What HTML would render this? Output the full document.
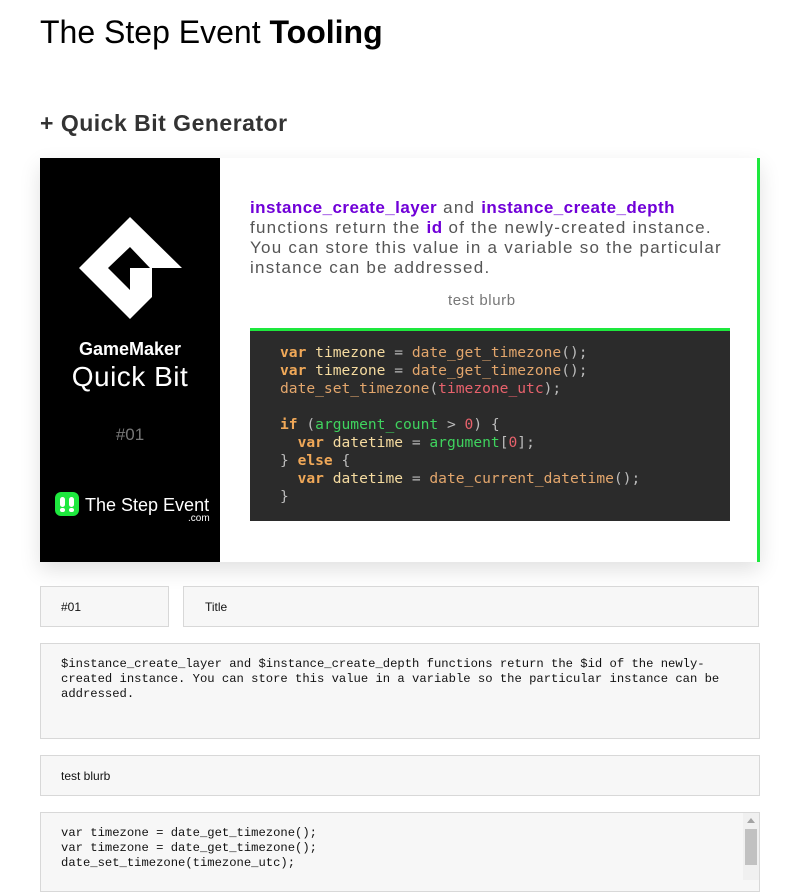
<!DOCTYPE html>
<html><head><meta charset="utf-8"><style>
body{margin:0;background:#fff;width:793px;height:880px;overflow:hidden;font-family:"Liberation Sans",sans-serif;position:relative}
.a{position:absolute;white-space:nowrap}
h1{position:absolute;left:40px;top:14px;margin:0;font-weight:400;font-size:32px;color:#000;letter-spacing:0px}
h2{position:absolute;left:40px;top:110px;margin:0;font-size:23px;color:#333;letter-spacing:0.5px}
.card{position:absolute;left:40px;top:158px;width:720px;height:404px;background:#fff;box-shadow:0 8px 20px rgba(0,0,0,.12)}
.left{position:absolute;left:0;top:0;width:180px;height:404px;background:#000}
.gr{position:absolute;right:0;top:0;width:3px;height:404px;background:#1ee83e}
.txt{position:absolute;left:210px;top:40px;font-size:17px;line-height:20px;color:#555;letter-spacing:1.25px;white-space:nowrap}
.txt b{color:#7000d8;letter-spacing:0.45px}
.code{position:absolute;left:210px;top:170px;width:480px;height:190px;background:#2b2b2b;border-top:3px solid #1ee83e;font-family:"DejaVu Sans Mono",monospace;font-size:14.6px;line-height:18px;color:#bbb}
.code pre{margin:0;position:absolute;left:30px;top:13px;font:inherit}
.k{color:#f0a858;font-weight:bold}.v{color:#f5dba0}.f{color:#e3a66c}.r{color:#e8626c}.g{color:#3fd35e}
.in{position:absolute;background:#f7f7f7;border:1px solid #d8d8d8;box-sizing:border-box;font-size:12px;color:#111}
.mono{font-family:"Liberation Mono",monospace;font-size:12.2px;line-height:15px}
</style></head><body>
<h1>The Step Event <b>Tooling</b></h1>
<h2>+ Quick Bit Generator</h2>
<div class="card">
 <div class="left">
  <svg width="180" height="404" style="position:absolute;left:0;top:0">
   <path fill="#fff" fill-rule="evenodd" d="M90 59 L142 110 L112 110 L112 139 L90 161 L39 110 Z M90 89 L110 110 L90 110 L90 132 L68 110 Z"/>
   <rect x="15" y="334" width="24" height="24" rx="6" fill="#1ee83e"/>
   <rect x="20" y="339" width="5" height="10" rx="2.5" fill="#fff"/><rect x="29" y="339" width="5" height="10" rx="2.5" fill="#fff"/>
   <rect x="20" y="350" width="5" height="4" rx="2" fill="#fff"/><rect x="29" y="350" width="5" height="4" rx="2" fill="#fff"/>
  </svg>
  <div class="a" style="left:0;width:180px;text-align:center;top:181px;color:#fff;font-weight:bold;font-size:18px">GameMaker</div>
  <div class="a" style="left:0;width:180px;text-align:center;top:203px;color:#fff;font-size:28px;letter-spacing:0.5px">Quick Bit</div>
  <div class="a" style="left:0;width:180px;text-align:center;top:267px;color:#777;font-size:17px">#01</div>
  <div class="a" style="left:45px;top:337px;color:#fff;font-size:18px">The Step Event</div>
  <div class="a" style="left:148px;top:355px;color:#fff;font-size:10px">.com</div>
 </div>
 <div class="gr"></div>
 <div class="txt"><b>instance_create_layer</b> and <b>instance_create_depth</b><br>functions return the <b>id</b> of the newly-created instance.<br>You can store this value in a variable so the particular<br>instance can be addressed.</div>
 <div class="a" style="left:408px;top:134px;color:#777;font-size:15px;letter-spacing:0.6px">test blurb</div>
 <div class="code"><pre><span class="k">var</span> <span class="v">timezone</span> = <span class="f">date_get_timezone</span>();
<span class="k">var</span> <span class="v">timezone</span> = <span class="f">date_get_timezone</span>();
<span class="f">date_set_timezone</span>(<span class="r">timezone_utc</span>);

<span class="k">if</span> (<span class="g">argument_count</span> &gt; <span class="r">0</span>) {
  <span class="k">var</span> <span class="v">datetime</span> = <span class="g">argument</span>[<span class="r">0</span>];
} <span class="k">else</span> {
  <span class="k">var</span> <span class="v">datetime</span> = <span class="f">date_current_datetime</span>();
}</pre></div>
</div>
<div class="in" style="left:40px;top:586px;width:129px;height:41px;padding:13px 0 0 20px">#01</div>
<div class="in" style="left:183px;top:586px;width:576px;height:41px;padding:13px 0 0 21px">Title</div>
<div class="in mono" style="left:40px;top:643px;width:720px;height:96px;padding:13px 20px 0 20px">$instance_create_layer and $instance_create_depth functions return the $id of the newly-<br>created instance. You can store this value in a variable so the particular instance can be<br>addressed.</div>
<div class="in" style="left:40px;top:755px;width:720px;height:41px;padding:13px 0 0 20px">test blurb</div>
<div class="in mono" style="left:40px;top:812px;width:720px;height:80px;padding:13px 0 0 20px">var timezone = date_get_timezone();<br>var timezone = date_get_timezone();<br>date_set_timezone(timezone_utc);</div>
<div class="a" style="left:743px;top:813px;width:16px;height:67px;background:#f0f0f0"></div>
<div class="a" style="left:745px;top:829px;width:12px;height:36px;background:#c1c1c1"></div>
<div class="a" style="left:747px;top:818px;width:0;height:0;border-left:4px solid transparent;border-right:4px solid transparent;border-bottom:5px solid #a3a3a3"></div>
</body></html>
